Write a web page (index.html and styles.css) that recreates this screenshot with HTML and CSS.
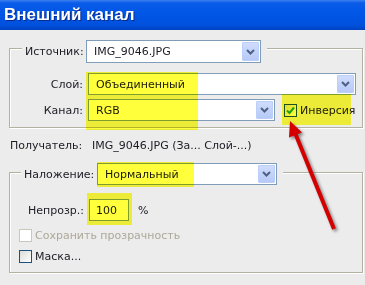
FILE: index.html
```html
<!DOCTYPE html>
<html lang="ru">
<head>
    <meta charset="UTF-8">
    <title>Внешний канал</title>
    <link rel="stylesheet" href="styles.css">
</head>
<body>
    <div class="titlebar">Внешний канал</div>

    <div class="dialog">
        <div class="group group-source">
            <div class="group-head">
                <span class="head-label">Источник:</span>
                <div class="select select-source">
                    <span class="select-text">IMG_9046.JPG</span>
                    <span class="drop"><svg width="9" height="6" viewBox="0 0 9 6"><path d="M1 1l3.5 3.5L8 1"/></svg></span>
                </div>
            </div>
            <div class="row row-layer">
                <span class="col">Слой:</span>
                <div class="select select-layer">
                    <span class="select-text">Объединенный</span>
                    <span class="drop"><svg width="9" height="6" viewBox="0 0 9 6"><path d="M1 1l3.5 3.5L8 1"/></svg></span>
                </div>
            </div>
            <div class="row row-channel">
                <span class="col">Канал:</span>
                <div class="select select-channel">
                    <span class="select-text">RGB</span>
                    <span class="drop"><svg width="9" height="6" viewBox="0 0 9 6"><path d="M1 1l3.5 3.5L8 1"/></svg></span>
                </div>
                <label class="check check-invert">
                    <span class="box checked"><svg width="11" height="11" viewBox="0 0 11 11"><path d="M2 5.5l2.5 2.5L9 2.5"/></svg></span>
                    Инверсия
                </label>
            </div>
        </div>

        <div class="target">
            <span class="target-label">Получатель:</span>
            <span>IMG_9046.JPG (За... Слой-...)</span>
        </div>

        <div class="group group-blend">
            <div class="group-head">
                <span class="head-label blend-label">Наложение:</span>
                <div class="select select-blend">
                    <span class="select-text">Нормальный</span>
                    <span class="drop"><svg width="9" height="6" viewBox="0 0 9 6"><path d="M1 1l3.5 3.5L8 1"/></svg></span>
                </div>
            </div>
            <div class="row row-opacity">
                <span class="opacity-label">Непрозр.:</span>
                <div class="input">100</div>
                <span class="unit">%</span>
            </div>
            <label class="check check-row disabled">
                <span class="box"></span>
                Сохранить прозрачность
            </label>
            <label class="check check-row">
                <span class="box"></span>
                Маска...
            </label>
        </div>
    </div>

    <!-- маркер и стрелка поверх скриншота -->
    <div class="hl hl-layer"></div>
    <div class="hl hl-invert"></div>
    <div class="hl hl-blend"></div>
    <div class="hl hl-opacity"></div>

    <svg class="arrow" width="365" height="285" viewBox="0 0 365 285">
        <line x1="295.5" y1="134" x2="334" y2="229"/>
        <polygon points="290,121 302,132.5 289,137.5"/>
    </svg>
</body>
</html>
```

FILE: styles.css
```css
body {
    margin: 0;
    width: 365px;
    height: 285px;
    overflow: hidden;
    position: relative;
    background-color: #ececec;
    font-family: "DejaVu Sans", Tahoma, sans-serif;
    font-size: 11px;
    color: #1b1b24;
}

.titlebar {
    height: 30px;
    line-height: 30px;
    padding-left: 4px;
    color: #fff;
    font-family: "Liberation Sans", Arial, sans-serif;
    font-weight: bold;
    font-size: 17px;
    text-shadow: 1px 1px 0 #0a2a8c;
    background: linear-gradient(#3a80f0 0, #0a5ce8 10%, #0056e6 45%, #0050dc 85%, #0042c0 100%);
}

.dialog {
    padding: 10px 2px 0 9px;
}

.group {
    border: 1px solid #b3b1a2;
    box-shadow: 1px 1px 0 #fff, inset 1px 1px 0 #fff;
}

.group-head {
    display: flex;
    align-items: center;
    width: fit-content;
    background-color: #ececec;
    padding: 0 6px 0 3px;
}

.group-source {
    margin-top: 8px;
    padding-bottom: 6px;
}

.group-source .group-head {
    margin: -9px 0 0 12px;
}

.head-label {
    width: 61px;
    white-space: nowrap;
}

.select {
    box-sizing: border-box;
    height: 22px;
    border: 1px solid #7f9db9;
    background-color: #fff;
    display: flex;
    align-items: center;
    padding-left: 7px;
}

.select-text {
    flex: 1;
    white-space: nowrap;
}

.drop {
    box-sizing: border-box;
    width: 17px;
    height: calc(100% - 2px);
    margin-right: 1px;
    border: 1px solid #bccefa;
    border-radius: 1px;
    background: linear-gradient(#cfdcfc, #b6c9f7);
    display: flex;
    align-items: center;
    justify-content: center;
}

.drop path {
    fill: none;
    stroke: #4d6185;
    stroke-width: 2;
}

.select-source {
    width: 175px;
    height: 23px;
}

.row {
    display: flex;
    align-items: center;
}

.col {
    width: 73px;
    margin-right: 5px;
    text-align: right;
}

.row-layer {
    margin-top: 10px;
}

.row-channel {
    margin-top: 4px;
}

.select-layer {
    width: 268px;
}

.select-channel {
    width: 187px;
}

.check {
    display: flex;
    align-items: center;
    white-space: nowrap;
}

.box {
    box-sizing: border-box;
    width: 13px;
    height: 13px;
    margin-right: 3px;
    border: 1px solid #1c5180;
    background: linear-gradient(135deg, #dcdcd7, #fff);
    display: flex;
    align-items: center;
    justify-content: center;
}

.box path {
    fill: none;
    stroke: #21a121;
    stroke-width: 2;
}

.check-invert {
    margin-left: 9px;
}

.target {
    display: flex;
    align-items: center;
    height: 14px;
    margin-top: 10px;
    padding-left: 1px;
}

.target-label {
    width: 82px;
}

.group-blend {
    margin-top: 20px;
    padding-bottom: 5px;
}

.group-blend .group-head {
    margin: -10px 0 0 11px;
}

.blend-label {
    width: 73px;
}

.select-blend {
    width: 180px;
}

.row-opacity {
    margin-top: 14px;
    padding-left: 18px;
}

.opacity-label {
    width: 61px;
}

.input {
    box-sizing: border-box;
    width: 40px;
    height: 22px;
    border: 1px solid #7f9db9;
    background-color: #fff;
    padding-left: 6px;
    display: flex;
    align-items: center;
}

.unit {
    margin-left: 9px;
}

.check-row {
    height: 21px;
    padding-left: 9px;
}

.row-opacity + .check-row {
    margin-top: 4px;
}

.disabled {
    color: #aca899;
}

.disabled .box {
    border-color: #cac8bb;
    background: #fff;
}

.hl {
    position: absolute;
    background-color: #ffff3c;
    mix-blend-mode: multiply;
}

.hl-layer {
    left: 86px;
    top: 72px;
    width: 112px;
    height: 58px;
}

.hl-invert {
    left: 282px;
    top: 94px;
    width: 69px;
    height: 31px;
}

.hl-blend {
    left: 97px;
    top: 162px;
    width: 97px;
    height: 25px;
}

.hl-opacity {
    left: 87px;
    top: 193px;
    width: 45px;
    height: 32px;
}

.arrow {
    position: absolute;
    left: 0;
    top: 0;
    filter: drop-shadow(2px 2px 1.5px rgba(60, 60, 60, 0.6));
}

.arrow line {
    stroke: #d40000;
    stroke-width: 4;
}

.arrow polygon {
    fill: #d40000;
}
```
